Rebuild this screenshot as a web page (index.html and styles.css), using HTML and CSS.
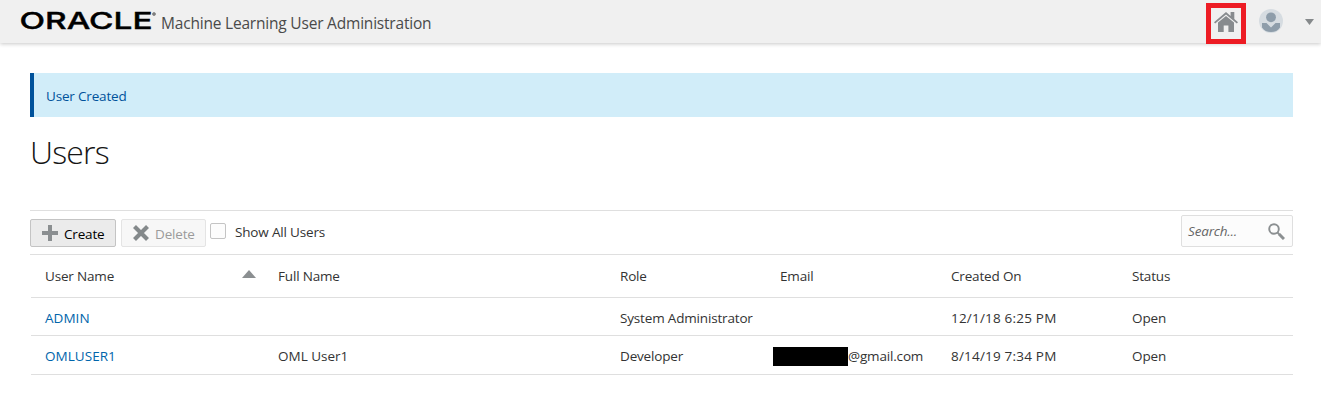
FILE: index.html
```html
<!DOCTYPE html>
<html lang="en">
<head>
<meta charset="utf-8">
<title>Machine Learning User Administration</title>
<link rel="stylesheet" href="styles.css">
</head>
<body>
<header class="topbar">
  <svg class="logo" width="138" height="34" viewBox="0 0 138 34" role="img" aria-label="ORACLE">
    <text class="logo-word" x="-.5" y="24.700" textLength="133" lengthAdjust="spacingAndGlyphs">ORACLE</text>
    <circle cx="134" cy="10" r="1.500" fill="#888" stroke="#555" stroke-width=".5"/>
  </svg>
  <span class="app-name">Machine Learning User Administration</span>
  <nav class="tools">
    <a class="home" href="#" aria-label="Home">
      <svg width="24" height="20" viewBox="0 0 24 20" fill="#878b8e">
        <path d="M0 10.200 12 0l4.600 3.900V0h3.700v6.900L24 10.200l-1.200 1.300L12 2.500 1.200 11.500z"/>
        <path d="M4 10.400 12 3.900l8 6.500V20h-5.600v-6.500h-4.700V20H4z"/>
      </svg>
    </a>
    <svg class="avatar" width="24" height="24" viewBox="0 0 24 24">
      <circle cx="12" cy="12" r="12" fill="#d6dce1"/>
      <circle cx="12" cy="8.300" r="4.900" fill="#8e9daa"/>
      <path d="M3 14h4.500L12 18.600 16.500 14H21v4.500Q18 23 12 23T3 18.500z" fill="#8e9daa"/>
    </svg>
    <svg class="caret" width="9" height="6" viewBox="0 0 9 6"><path d="M0 0h9L4.500 6z" fill="#85898b"/></svg>
  </nav>
</header>
<main class="page">
  <div class="notice">User Created</div>
  <h1 class="title">Users</h1>
  <div class="toolbar">
    <button class="btn">
      <svg width="16" height="16" viewBox="0 0 16 16"><path d="M8 0v16M0 8h16" stroke="#8b8f91" stroke-width="4"/></svg>
      <span>Create</span>
    </button>
    <button class="btn btn-delete" disabled>
      <svg width="16" height="16" viewBox="0 0 16 16"><path d="M1.500 1.500l13 13M14.500 1.500l-13 13" stroke="#84898b" stroke-width="4.200"/></svg>
      <span>Delete</span>
    </button>
    <span class="checkbox"></span>
    <span class="check-label">Show All Users</span>
    <div class="search">
      <span>Search...</span>
      <svg width="17" height="17" viewBox="0 0 17 17" fill="none" stroke="#8b8f91"><circle cx="6" cy="6" r="4.800" stroke-width="1.900"/><path d="M9.400 9.400l1.800 1.800" stroke-width="2"/><path d="M11 11l5 5" stroke-width="3"/></svg>
    </div>
  </div>
  <div class="grid">
    <div class="row head">
      <span class="sorted">User Name<svg width="14" height="8" viewBox="0 0 14 8"><path d="M7 0l7 8H0z" fill="#8b8f91"/></svg></span>
      <span>Full Name</span><span>Role</span><span>Email</span><span>Created On</span><span>Status</span>
    </div>
    <div class="row first">
      <a href="#">ADMIN</a><span></span><span>System Administrator</span><span></span><span class="date">12/1/18 6:25 PM</span><span class="status">Open</span>
    </div>
    <div class="row last">
      <a href="#">OMLUSER1</a><span class="full-name">OML User1</span><span>Developer</span><span class="email"><i class="redacted"></i>@gmail.com</span><span class="date">8/14/19 7:34 PM</span><span class="status">Open</span>
    </div>
  </div>
</main>
</body>
</html>
```
FILE: styles.css
```css
* { box-sizing: border-box; }
body { margin: 0; background: #fff; color: #333; font: 13.5px/20px "Open Sans", "Noto Sans", sans-serif; letter-spacing: -.17px; }
a { color: #0065ab; text-decoration: none; }
.topbar { height: 43px; display: flex; align-items: flex-start; padding-left: 20px; background: #f0f0f0; box-shadow: 0 1px 4px rgba(0,0,0,.22); }
.logo { margin-top: 4px; }
.logo-word { font: 500 23.500px Inter, sans-serif; fill: #000; stroke: #000; stroke-width: .4; letter-spacing: 0; }
.app-name { margin: 12px 0 0 3px; font-size: 15.500px; line-height: 22px; letter-spacing: -.2px; color: #4a4a4a; white-space: nowrap; }
.tools { margin-left: auto; display: flex; align-items: flex-start; }
.home { width: 40px; height: 41px; margin-top: 3px; border: 5px solid #ed1c24; position: relative; display: flex; justify-content: center; padding-top: 4px; }
.home svg { flex: none; }
.avatar { margin: 9px 0 0 13px; }
.caret { margin: 19px 7px 0 22px; }
.page { padding: 30px 28px 0 30px; }
.notice { height: 44px; border-left: 4px solid #00529b; padding: 13px 12px; background: #d1edf9; color: #00529b; }
.title { margin: 13px 0 0; height: 80px; font-size: 32px; line-height: 44px; font-weight: 300; letter-spacing: -.8px; color: #151515; }
.toolbar { height: 45px; border: solid #dfdfdf; border-width: 1px 0; display: flex; align-items: flex-start; }
.btn { display: flex; align-items: center; width: 86px; height: 28px; margin-top: 8px; padding: 0 0 0 11px; gap: 6px; border: 1px solid #c4c4c4; border-radius: 2px; background: #ebebeb; color: #000; font: inherit; letter-spacing: inherit; }
.btn span { padding-top: 2px; }
.btn-delete { width: 85px; margin-left: 5px; border-color: #e4e4e4; background: #f7f7f7; color: #9b9b9b; }
.checkbox { width: 16px; height: 16px; margin: 12px 0 0 4px; border: 1px solid #c4c4c4; border-radius: 2px; background: #fcfcfc; }
.check-label { margin: 11px 0 0 9px; }
.search { width: 112px; height: 32px; margin: 4px 0 0 auto; padding: 0 7px 0 6px; border: 1px solid #dfdfdf; border-radius: 2px; background: #fcfcfc; display: flex; align-items: center; justify-content: space-between; color: #666; font-style: italic; }
.grid { margin-left: 1px; }
.row { display: grid; grid-template-columns: 233px 342px 160px 171px 181px 1fr; padding-left: 14px; align-items: center; border-bottom: 1px solid #dfdfdf; white-space: nowrap; }
.head { height: 43px; }
.first { height: 38px; padding-top: 2px; }
.last { height: 39px; padding-top: 2px; }
.row a { letter-spacing: .05px; }
.full-name { letter-spacing: 0; }
.date { letter-spacing: .2px; }
.status { letter-spacing: -.1px; }
.sorted { display: flex; align-items: center; justify-content: space-between; padding-right: 22px; }
.sorted svg { margin-bottom: 4px; }
.email { display: flex; align-items: center; margin-left: -7px; }
.redacted { width: 75px; height: 19px; background: #000; }
```
